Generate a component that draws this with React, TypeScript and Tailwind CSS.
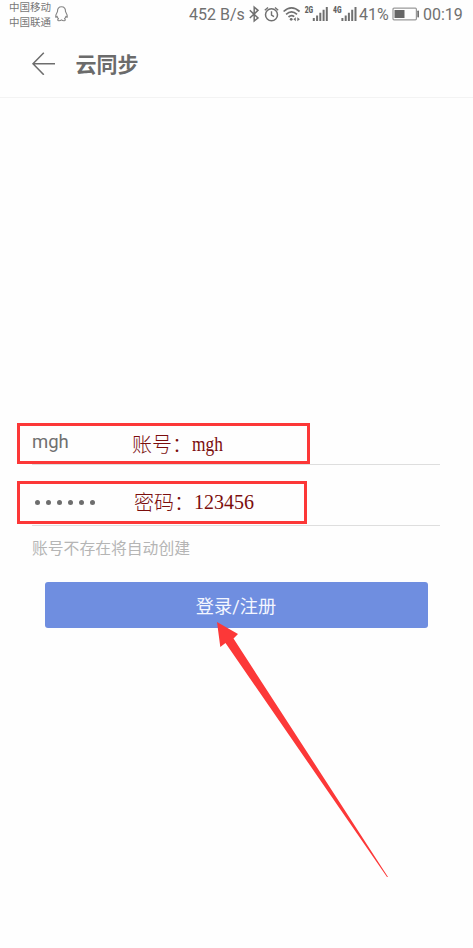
import type { ReactNode } from "react";

function QqIcon() {
  return (
    <svg className="ml-[3px] mt-px h-[18px] w-[15px] shrink-0" viewBox="0 0 15 18" fill="none" stroke="#858585" strokeWidth="1.1" strokeLinejoin="round">
      <path d="M7.5 1.8C4.7 1.8 3.4 3.7 3.5 6.4C2.6 8 1.5 10.1 1.7 12.1C2 12.6 2.7 11.8 3.1 11.3C3.4 12.5 3.9 13.1 4.5 13.7C3.5 14.3 3.3 15.5 4.6 15.7C5.8 15.8 6.8 15.5 7.5 14.8C8.2 15.5 9.2 15.8 10.4 15.7C11.7 15.5 11.5 14.3 10.5 13.7C11.1 13.1 11.6 12.5 11.9 11.3C12.3 11.8 13 12.6 13.3 12.1C13.5 10.1 12.4 8 11.5 6.4C11.6 3.7 10.3 1.8 7.5 1.8Z" />
    </svg>
  );
}

function StatusIcons() {
  return (
    <svg className="absolute left-[246px] top-0 h-7 w-[112px]" viewBox="246 0 112 28" fill="none" stroke="#707070" strokeWidth="1.5">
      <path d="M249.8 10.2L258 18L254.2 21V7.2L258 10.4L249.8 18" />
      <circle cx="271.5" cy="14.7" r="6" />
      <path d="M271.5 11.2V15L274 16.6M264.8 10.2L268 7.5M275 7.5L278.2 10.2" strokeWidth="1.4" />
      <path d="M283.6 11.5Q291.5 4.2 299.6 11.5M286.1 14.3Q291.5 9.4 297 14.3M288.5 17Q291.5 14.4 294.2 16.7" strokeWidth="1.7" />
      <circle cx="291.2" cy="19.3" r="1.4" fill="#707070" stroke="none" />
      <path d="M293.4 19.2L295.8 17.2V21.2ZM299.9 19.2L297.3 17.2V21.2Z" fill="#707070" stroke="none" />
      <g fill="#707070" stroke="none">
        <path d="M312.8 18h2v3h-2zM316.1 15.5h2v5.5h-2zM319.3 12.7h2v8.3h-2zM322.6 9.8h2V21h-2zM325.8 7h2v14h-2z" />
        <path d="M341.4 18h2v3h-2zM344.7 15.5h2v5.5h-2zM347.9 12.7h2v8.3h-2zM351.2 9.8h2V21h-2zM354.5 7h2v14h-2z" />
      </g>
      <g fill="#606060" stroke="none" fontFamily="Roboto, sans-serif" fontWeight="900" fontSize="9">
        <text x="304.7" y="13" textLength="8.5" lengthAdjust="spacingAndGlyphs">2G</text>
        <text x="333" y="13" textLength="8.5" lengthAdjust="spacingAndGlyphs">4G</text>
      </g>
    </svg>
  );
}

function Field({ children, note, className }: { children: ReactNode; note: ReactNode; className: string }) {
  return (
    <div className={`relative ml-8 w-[408px] border-b border-[#dedede] ${className}`}>
      {children}
      {note}
    </div>
  );
}

export default function App() {
  return (
    <div className="relative h-[948px] w-[473px] overflow-hidden bg-[#fefefe] font-['Roboto','Noto_Sans_CJK_SC',sans-serif] text-[#707070]">
      <header className="h-[98px] border-b border-[#f3f3f3]">
        <div className="relative flex h-7 pl-[9px]">
          <div className="w-[42px] whitespace-nowrap pt-px text-[10.5px] leading-[14.5px] text-[#777]">
            <div>中国移动</div>
            <div>中国联通</div>
          </div>
          <div className="pt-[4px]"><QqIcon /></div>
          <span className="absolute left-[189px] top-[5px] whitespace-nowrap text-[16px] leading-5">452 B/s</span>
          <StatusIcons />
          <span className="absolute left-[359px] top-[5px] text-[16px] leading-5">41%</span>
          <svg className="absolute left-[392px] top-[7px] h-[14px] w-[28px]" viewBox="0 0 28 14">
            <rect x="1" y="1.2" width="23.4" height="11.6" rx="1" fill="none" stroke="#999" strokeWidth="1.2" />
            <rect x="2.5" y="3" width="10" height="8" fill="#666" />
            <rect x="25.3" y="3.5" width="1.7" height="7" rx=".7" fill="#707070" />
          </svg>
          <span className="absolute left-[423px] top-[5px] text-[16px] leading-5">00:19</span>
        </div>
        <div className="flex h-[70px] items-center pl-[31px]">
          <svg className="h-6 w-[25px]" viewBox="0 0 25 24" fill="none" stroke="#6d6d6d" strokeWidth="1.5">
            <path d="M12.8 1.7L2 12.8L12.8 23.8M2 12.8H24" />
          </svg>
          <h1 className="ml-[19.5px] pt-[3px] text-[21px] font-bold leading-6 text-[#6b6b6b]">云同步</h1>
        </div>
      </header>

      <main className="pt-[325px]">
        <Field
          className="h-[42px]"
          note={
            <div className="absolute left-[-15px] top-0 h-[41px] w-[293px] border-[3px] border-[#fc3737] text-[20px] leading-6 text-[#7b0d0d]">
              <span className="absolute left-[112px] top-[6px] whitespace-nowrap font-['Noto_Sans_CJK_SC',sans-serif] font-light">账号：</span>
              <span className="absolute left-[172px] top-[6px] origin-left scale-x-[0.87] font-['Liberation_Serif',serif]">mgh</span>
            </div>
          }
        >
          <span className="block pt-[7px] text-[18.5px] leading-6">mgh</span>
        </Field>
        <Field
          className="mt-4 h-[45px]"
          note={
            <div className="absolute left-[-15px] top-0 h-[43px] w-[290px] border-[3px] border-[#fc3737] text-[20px] leading-6 text-[#7b0d0d]">
              <span className="absolute left-[114px] top-[6px] whitespace-nowrap font-['Noto_Sans_CJK_SC',sans-serif] font-light">密码：</span>
              <span className="absolute left-[174px] top-[6px] font-['Liberation_Serif',serif]">123456</span>
            </div>
          }
        >
          <div className="flex gap-[6px] pl-[2.5px] pt-[19px]">
            {[0, 1, 2, 3, 4, 5].map((dot) => (
              <span key={dot} className="h-[5px] w-[5px] rounded-full bg-[#6d6d6d]" />
            ))}
          </div>
        </Field>
        <p className="ml-8 mt-[11px] text-[15.8px] leading-6 text-[#b5b5b5]">账号不存在将自动创建</p>
        <button className="ml-[44.5px] mt-[21px] flex h-[46px] w-[383px] items-center justify-center rounded-[3px] bg-[#6f8ee0] pt-[3px] text-[18.2px] font-normal text-[#f3f6ff]">
          登录/注册
        </button>
      </main>

      <svg className="absolute left-[210px] top-[615px] h-[270px] w-[190px]" viewBox="210 615 190 270">
        <path d="M217 622L238 634L233.5 638.5L388 877L387 877L225.5 643L220.3 647Z" fill="#fc3838" />
      </svg>
    </div>
  );
}
